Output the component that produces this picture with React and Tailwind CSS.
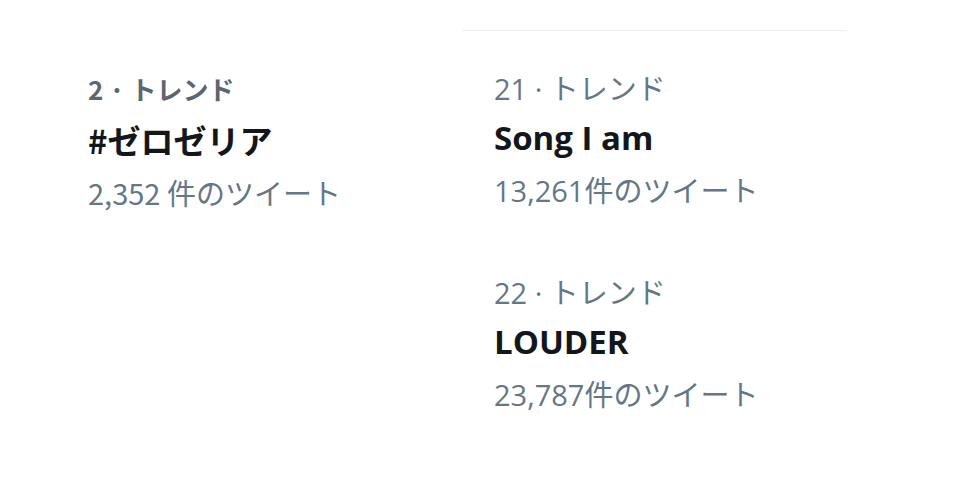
export default function App() {
  const jp = { fontFamily: '"Noto Sans CJK JP", "Noto Sans", sans-serif' };
  const win = { fontFamily: '"Open Sans", "Noto Sans CJK JP", sans-serif' };
  return (
    <div className="w-[961px] h-[503px] bg-white flex overflow-hidden">
      <div className="w-[462px] pl-[88px] pt-[65px] flex flex-col" style={jp}>
        <div className="leading-[48px] text-[26px] font-semibold text-[#5b6670] whitespace-nowrap">2 · トレンド</div>
        <div className="leading-[54px] text-[33px] font-bold text-[#14171a] whitespace-nowrap">#ゼロゼリア</div>
        <div className="leading-[50px] text-[29px] text-[#657786] whitespace-nowrap">2,352 件のツイート</div>
      </div>
      <div className="w-[385px] flex flex-col">
        <div className="mt-[30px] h-px bg-[#eef1f4]" />
        <div className="pl-[32px] pt-[34px] flex flex-col gap-[50px]" style={win}>
          <div className="flex flex-col">
            <div className="leading-[48px] text-[29px] text-[#657786] whitespace-nowrap">21 · トレンド</div>
            <div className="leading-[50px] text-[33px] font-bold text-[#14171a] whitespace-nowrap">Song I am</div>
            <div className="leading-[56px] text-[29px] text-[#657786] whitespace-nowrap">13,261件のツイート</div>
          </div>
          <div className="flex flex-col">
            <div className="leading-[48px] text-[29px] text-[#657786] whitespace-nowrap">22 · トレンド</div>
            <div className="leading-[50px] text-[33px] font-bold text-[#14171a] whitespace-nowrap">LOUDER</div>
            <div className="leading-[56px] text-[29px] text-[#657786] whitespace-nowrap">23,787件のツイート</div>
          </div>
        </div>
      </div>
    </div>
  );
}
